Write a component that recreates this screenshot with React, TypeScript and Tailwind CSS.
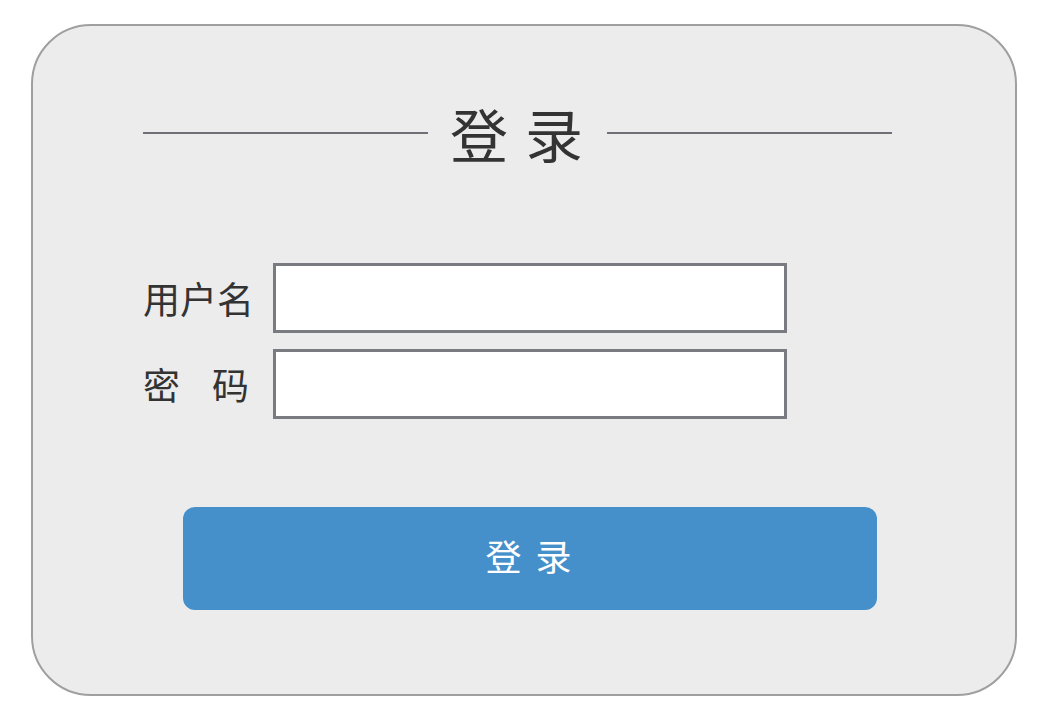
export default function App() {
  return (
    <div
      className="min-h-screen bg-white pl-[31px] pt-[24px]"
      style={{ fontFamily: '"Noto Sans CJK SC", "Noto Sans", sans-serif' }}
    >
      <div className="w-[986px] h-[672px] rounded-[60px] border-2 border-[#9f9f9f] bg-[#ececec] pt-[78px]">
        {/* Title */}
        <div className="ml-[110px] w-[749px] flex items-center gap-[22px]">
          <span className="flex-1 h-[2px] bg-[#6f7075]" />
          <h1 className="text-[58px] leading-none font-normal text-[#333] tracking-[2px]">
            登 录
          </h1>
          <span className="flex-1 h-[2px] bg-[#6f7075]" />
        </div>

        {/* Fields */}
        <div className="mt-[101px] ml-[110px] flex flex-col gap-[16px]">
          <div className="flex items-center">
            <label className="w-[130px] text-[37px] leading-none text-[#333]">
              用户名
            </label>
            <input
              type="text"
              className="w-[514px] h-[70px] bg-white border-[3px] border-[#7a7b80] outline-none px-3 text-2xl"
            />
          </div>
          <div className="flex items-center">
            <label className="w-[130px] flex text-[37px] leading-none text-[#333]">
              <span>密</span>
              <span className="ml-[32px]">码</span>
            </label>
            <input
              type="password"
              className="w-[514px] h-[70px] bg-white border-[3px] border-[#7a7b80] outline-none px-3 text-2xl"
            />
          </div>
        </div>

        {/* Button */}
        <button className="mt-[88px] ml-[150px] w-[694px] h-[103px] pb-[8px] rounded-[12px] bg-[#4590cb] text-white text-[36px] leading-none tracking-[3px]">
          登 录
        </button>
      </div>
    </div>
  );
}
